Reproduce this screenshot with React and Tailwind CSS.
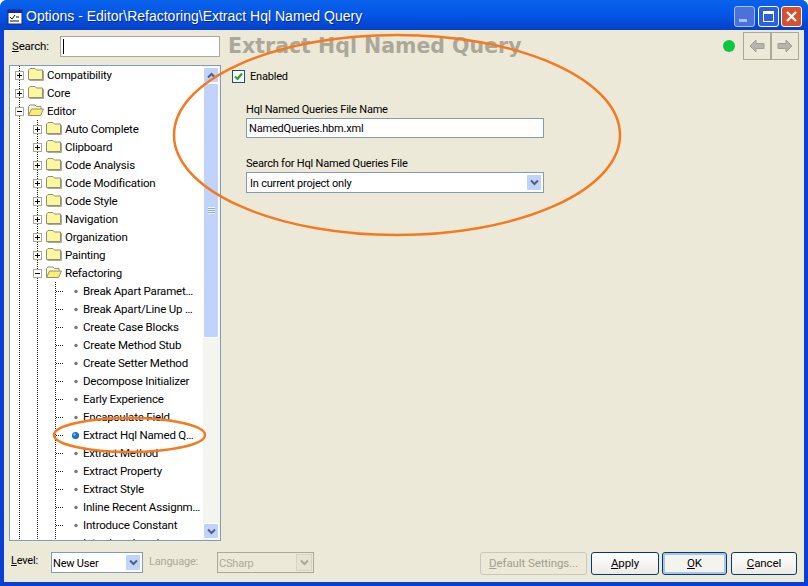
const FONT = "font-['Roboto','Liberation_Sans',sans-serif]";

const rows = [
  [0, 'c', 'Compatibility'],
  [0, 'c', 'Core'],
  [0, 'o', 'Editor'],
  [1, 'c', 'Auto Complete'],
  [1, 'c', 'Clipboard'],
  [1, 'c', 'Code Analysis'],
  [1, 'c', 'Code Modification'],
  [1, 'c', 'Code Style'],
  [1, 'c', 'Navigation'],
  [1, 'c', 'Organization'],
  [1, 'c', 'Painting'],
  [1, 'o', 'Refactoring'],
  [2, 'l', 'Break Apart Paramet…'],
  [2, 'l', 'Break Apart/Line Up …'],
  [2, 'l', 'Create Case Blocks'],
  [2, 'l', 'Create Method Stub'],
  [2, 'l', 'Create Setter Method'],
  [2, 'l', 'Decompose Initializer'],
  [2, 'l', 'Early Experience'],
  [2, 'l', 'Encapsulate Field'],
  [2, 's', 'Extract Hql Named Q…'],
  [2, 'l', 'Extract Method'],
  [2, 'l', 'Extract Property'],
  [2, 'l', 'Extract Style'],
  [2, 'l', 'Inline Recent Assignm…'],
  [2, 'l', 'Introduce Constant'],
  [2, 'l', 'Introduce Local'],
];

function Folder({ x, open }) {
  if (open) {
    return (
      <g transform={`translate(${x},0)`}>
        <path d="M1.5 13.5 L1.5 4.5 L3 3 L8 3 L9.5 4.5 L14 4.5 L14 7" fill="#fbf8d4" stroke="#8f8f7a" />
        <path d="M1.5 13.5 L4.5 7 L16.5 7 L13.5 13.5 Z" fill="#fbf06a" stroke="#8f8f7a" />
      </g>
    );
  }
  return (
    <g transform={`translate(${x},0)`}>
      <path d="M1.5 4 L3 2.5 L8 2.5 L9.5 4 L15.5 4 L15.5 13.5 L1.5 13.5 Z" fill="#fbf79c" stroke="#8f8f7a" />
      <path d="M16.5 5 V14.5 H2.5" fill="none" stroke="#aca899" />
    </g>
  );
}

function Expander({ x, open }) {
  return (
    <g transform={`translate(${x},0)`}>
      <rect x="0.5" y="5.5" width="8" height="8" fill="#fff" stroke="#a9a893" />
      <path d="M2 9.5 H7" stroke="#000" />
      {!open && <path d="M4.5 7 V12" stroke="#000" />}
    </g>
  );
}

function Guides({ level, kind }) {
  const dot = { stroke: '#222', strokeDasharray: '1 1', fill: 'none' };
  return (
    <svg width="70" height="18" className="shrink-0 block">
      <path d="M9.5 0 V18" {...dot} />
      {level >= 1 && <path d="M27.5 0 V18" {...dot} />}
      {level === 2 && <path d="M45.5 0 V18 M46 9.5 H54" {...dot} />}
      {level === 0 && <><Expander x={5} open={kind === 'o'} /><Folder x={17} open={kind === 'o'} /></>}
      {level === 1 && <><Expander x={23} open={kind === 'o'} /><Folder x={35} open={kind === 'o'} /></>}
      {kind === 'l' && <circle cx="66" cy="9.5" r="1.7" fill="#777" />}
      {kind === 's' && (
        <>
          <circle cx="65.5" cy="9.5" r="3.6" fill="#1a72c9" />
          <circle cx="64.5" cy="8.5" r="1.2" fill="#8cc4f2" />
        </>
      )}
    </svg>
  );
}

function TreeRow({ level, kind, label }) {
  const textMargin = level === 0 ? '-ml-[33px]' : level === 1 ? '-ml-[15px]' : 'ml-[3px]';
  return (
    <div className="flex h-[18px] items-center shrink-0">
      <Guides level={level} kind={kind} />
      <span className={`${textMargin} pt-[2px] whitespace-nowrap text-[11.5px] tracking-[-0.2px] text-black`}>{label}</span>
    </div>
  );
}

function Chevron({ up }) {
  return (
    <svg width="9" height="7" viewBox="0 0 9 7">
      <path d={up ? 'M1 5.5 L4.5 2 L8 5.5' : 'M1 1.5 L4.5 5 L8 1.5'} fill="none" stroke="#4d6185" strokeWidth="2" />
    </svg>
  );
}

function ScrollBtn({ up }) {
  return (
    <div className="h-[16px] flex items-center justify-center shrink-0 rounded-[2px] border border-white bg-[#c1d3fb]">
      <Chevron up={up} />
    </div>
  );
}

function ComboBtn() {
  return (
    <div className="w-[16px] self-stretch my-[1px] mr-[1px] flex items-center justify-center rounded-[2px] border border-white bg-[#c1d3fb]">
      <Chevron />
    </div>
  );
}

function Btn({ children, def, disabled, w, ml }) {
  return (
    <div
      className={`${w} ${ml} h-[23px] pt-px flex items-center justify-center rounded-[3px] border text-[11.5px] tracking-[-0.1px] ${
        disabled
          ? 'border-[#c9c7ba] text-[#a19f8f] bg-[#ece9d8]'
          : def
          ? 'border-[#003c74] bg-[#f4f4ee] shadow-[inset_0_0_0_2px_#a9c4ec]'
          : 'border-[#003c74] bg-gradient-to-b from-white to-[#ecebe5]'
      }`}
    >
      {children}
    </div>
  );
}

function Arrow({ left }) {
  return (
    <div className="w-[28px] h-[28px] border border-[#aca899] flex items-center justify-center">
      <svg width="16" height="14" viewBox="0 0 16 14">
        <path
          d={left ? 'M1 7 L7 1 V4.5 H15 V9.5 H7 V13 Z' : 'M15 7 L9 1 V4.5 H1 V9.5 H9 V13 Z'}
          fill="#b5b5ad"
          stroke="#a0a098"
        />
      </svg>
    </div>
  );
}

export default function App() {
  return (
    <div className={`relative w-[808px] h-[586px] bg-white overflow-hidden ${FONT} text-[11px] tracking-[-0.2px] text-black`}>
      <div className="w-full h-full flex flex-col rounded-t-[7px] overflow-hidden bg-[#0a3fd6]">
        {/* title bar */}
        <div className="h-[30px] pt-[3px] shrink-0 flex items-center pl-[7px] pr-[6px] bg-gradient-to-b from-[#0a62ea] via-[#0455e6] to-[#0440c8]">
          <svg width="16" height="16" viewBox="0 0 16 16" className="shrink-0">
            <rect x="1" y="1" width="14" height="14" fill="#fff" stroke="#1a2a6a" />
            <rect x="1" y="1" width="14" height="3" fill="#1a2a9a" />
            <path d="M3 8 L5 10 L8 6 M3 12 H12 M9 8 H12" stroke="#111" fill="none" />
          </svg>
          <span className="ml-[3px] text-white text-[14px] tracking-normal font-['Liberation_Sans',sans-serif] whitespace-nowrap [text-shadow:1px_1px_0_#0a2a90]">
            Options - Editor\Refactoring\Extract Hql Named Query
          </span>
          <div className="ml-auto flex gap-[2px] items-center">
            <div className="w-[21px] h-[21px] mr-[1px] rounded-[3px] border border-[#a8bdf0] bg-[#4a72d8] flex items-end pl-[4px] pb-[4px]">
              <div className="w-[8px] h-[3px] bg-[#a8bdf0]" />
            </div>
            <div className="w-[21px] h-[21px] rounded-[3px] border border-white bg-[#2c5fe0] flex items-center justify-center">
              <div className="w-[11px] h-[11px] border border-white border-t-[3px]" />
            </div>
            <div className="w-[21px] h-[21px] rounded-[3px] border border-white bg-[#d8502c] flex items-center justify-center">
              <svg width="13" height="13" viewBox="0 0 13 13">
                <path d="M2 2 L11 11 M11 2 L2 11" stroke="#fff" strokeWidth="2.4" />
              </svg>
            </div>
          </div>
        </div>

        {/* body */}
        <div className="flex-1 min-h-0 mx-[4px] mb-[4px] bg-[#ece9d8] flex flex-col">
          {/* search row */}
          <div className="h-[32px] mb-[3px] shrink-0 flex items-center pl-[8px] pr-[5px]">
            <span className="w-[48px] pt-[2px] text-[11.5px]"><span className="underline">S</span>earch:</span>
            <div className="w-[160px] h-[21px] bg-white border border-[#aca899] flex items-center pl-[2px]">
              <div className="w-px h-[15px] bg-black" />
            </div>
            <span className="ml-[8px] text-[20.5px] tracking-normal leading-[20px] font-bold font-['DejaVu_Sans',sans-serif] text-[#aca899] whitespace-nowrap -mt-[1px]">
              Extract Hql Named Query
            </span>
            <div className="ml-auto mr-[8px] w-[12px] h-[12px] rounded-full bg-[#0dc83f]" />
            <div className="flex">
              <Arrow left />
              <Arrow />
            </div>
          </div>

          {/* middle */}
          <div className="flex-1 min-h-0 flex">
            <div className="ml-[5px] w-[212px] h-[476px] border border-[#7f9db9] bg-white flex overflow-hidden">
              <div className="flex-1 min-w-0 flex flex-col overflow-hidden">
                {rows.map((r) => (
                  <TreeRow key={r[2]} level={r[0]} kind={r[1]} label={r[2]} />
                ))}
              </div>
              <div className="w-[17px] shrink-0 flex flex-col bg-[#f5f5ef] pr-[1px] py-[1px]">
                <ScrollBtn up />
                <div className="flex-1 min-h-0">
                  <div className="h-[255px] rounded-[2px] border border-white bg-[#c1d3fb] flex items-center justify-center">
                    <div className="w-[7px] h-[7px] bg-[repeating-linear-gradient(#eef3ff_0_1px,#8fa9e0_1px_2px)]" />
                  </div>
                </div>
                <ScrollBtn />
              </div>
            </div>

            <div className="flex-1 pl-[11px] pt-[5px]">
              <div className="flex items-center h-[13px]">
                <div className="w-[13px] h-[13px] border border-[#1c5180] bg-white flex items-center justify-center">
                  <svg width="9" height="9" viewBox="0 0 9 9">
                    <path d="M1 4.5 L3.5 7 L8 1.5" fill="none" stroke="#21a121" strokeWidth="2" />
                  </svg>
                </div>
                <span className="ml-[5px] pt-[2px]">Enabled</span>
              </div>
              <div className="ml-[14px] mt-[19px] h-[16px] leading-[16px]">Hql Named Queries File Name</div>
              <div className="ml-[14px] w-[298px] h-[20px] border border-[#7f9db9] bg-white flex items-center pl-[2px] pt-[2px]">
                NamedQueries.hbm.xml
              </div>
              <div className="ml-[14px] mt-[18px] h-[16px] leading-[16px]">Search for Hql Named Queries File</div>
              <div className="ml-[14px] w-[298px] h-[21px] border border-[#7f9db9] bg-white flex items-center pl-[3px] justify-between">
                <span className="pt-[3px]">In current project only</span>
                <ComboBtn />
              </div>
            </div>
          </div>

          {/* bottom bar */}
          <div className="h-[41px] shrink-0 flex items-start pl-[7px] pr-[7px] pt-[11px]">
            <span className="w-[40px] mt-[1px]"><span className="underline">L</span>evel:</span>
            <div className="w-[92px] h-[21px] border border-[#7f9db9] bg-white flex items-center justify-between pl-[1px]">
              <span className="pt-[3px]">New User</span>
              <ComboBtn />
            </div>
            <span className="ml-[6px] w-[68px] mt-[2px] text-[#aca899]">Language:</span>
            <div className="w-[97px] h-[21px] border border-[#aca899] bg-[#ece9d8] flex items-center justify-between pl-[1px] text-[#aca899]">
              <span className="pt-[3px]">CSharp</span>
              <div className="w-[16px] h-[17px] mr-[1px] flex items-center justify-center bg-[#e6e3d5] border border-[#d5d2c4]">
                <svg width="9" height="7" viewBox="0 0 9 7"><path d="M1 1.5 L4.5 5 L8 1.5" fill="none" stroke="#aca899" strokeWidth="2" /></svg>
              </div>
            </div>
            <div className="ml-auto flex">
              <Btn disabled w="w-[107px]"><span><span className="underline">D</span>efault Settings...</span></Btn>
              <Btn w="w-[68px]" ml="ml-[4px]"><span><span className="underline">A</span>pply</span></Btn>
              <Btn def w="w-[65px]" ml="ml-[3px]"><span><span className="underline">O</span>K</span></Btn>
              <Btn w="w-[66px]" ml="ml-[4px]"><span><span className="underline">C</span>ancel</span></Btn>
            </div>
          </div>
        </div>
      </div>

      {/* hand-drawn annotation ellipses over the dialog */}
      <svg width="808" height="586" className="absolute inset-0 pointer-events-none">
        <ellipse cx="397" cy="135" rx="223" ry="100" fill="none" stroke="#f5791f" strokeWidth="2.5" />
        <ellipse cx="129.5" cy="435" rx="75.5" ry="17" fill="none" stroke="#f5791f" strokeWidth="2.5" />
      </svg>
    </div>
  );
}
